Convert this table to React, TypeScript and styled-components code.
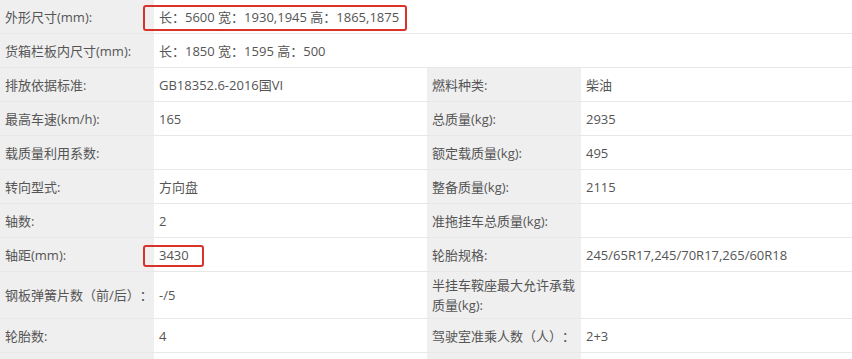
import React from "react";
import styled, { createGlobalStyle } from "styled-components";

const GlobalStyle = createGlobalStyle`
  html, body { margin: 0; padding: 0; background: #ffffff; }
  body {
    font-family: "Open Sans", "Noto Sans CJK SC", sans-serif;
    font-size: 13px;
    color: #555555;
    text-spacing-trim: space-all;
  }
`;

const Grid = styled.div`
  display: grid;
  grid-template-columns: 154px 273px 154px 1fr;
  width: 852px;
`;

const Cell = styled.div<{ $label?: boolean; $span?: number }>`
  box-sizing: border-box;
  display: flex;
  align-items: center;
  min-height: 34px;
  padding: 3px 5px;
  line-height: 20px;
  border-bottom: 1px solid #e8e8e8;
  background: ${(p) => (p.$label ? "#efefef" : "#ffffff")};
  grid-column: span ${(p) => p.$span ?? 1};
  white-space: nowrap;
  position: relative;
`;

const Highlight = styled.span<{ $w: number; $h: number; $top: number }>`
  position: absolute;
  z-index: 1;
  left: -11px;
  top: ${(p) => p.$top}px;
  width: ${(p) => p.$w}px;
  height: ${(p) => p.$h}px;
  box-sizing: border-box;
  border: 2px solid #d8322a;
  border-radius: 3px;
  pointer-events: none;
`;

type Pair = [React.ReactNode, React.ReactNode];

const rows: { left: Pair; right: Pair; mark?: boolean }[] = [
  { left: ["排放依据标准:", "GB18352.6-2016国VI"], right: ["燃料种类:", "柴油"] },
  { left: ["最高车速(km/h):", "165"], right: ["总质量(kg):", "2935"] },
  { left: ["载质量利用系数:", ""], right: ["额定载质量(kg):", "495"] },
  { left: ["转向型式:", "方向盘"], right: ["整备质量(kg):", "2115"] },
  { left: ["轴数:", "2"], right: ["准拖挂车总质量(kg):", ""] },
  { left: ["轴距(mm):", "3430"], right: ["轮胎规格:", "245/65R17,245/70R17,265/60R18"], mark: true },
  {
    left: ["钢板弹簧片数（前/后）：", "-/5"],
    right: [
      <span>
        半挂车鞍座最大允许承载
        <br />
        质量(kg):
      </span>,
      "",
    ],
  },
  { left: ["轮胎数:", "4"], right: ["驾驶室准乘人数（人）：", "2+3"] },
  { left: ["", ""], right: ["", ""] },
];

export default function App() {
  return (
    <>
      <GlobalStyle />
      <Grid>
        <Cell $label>外形尺寸(mm):</Cell>
        <Cell $span={3}>
          长：5600 宽：1930,1945 高：1865,1875
          <Highlight $w={264} $h={26} $top={5} />
        </Cell>
        <Cell $label>货箱栏板内尺寸(mm):</Cell>
        <Cell $span={3}>长：1850 宽：1595 高：500</Cell>
        {rows.map((r, i) => (
          <React.Fragment key={i}>
            <Cell $label>{r.left[0]}</Cell>
            <Cell>
              {r.left[1]}
              {r.mark && <Highlight $w={61} $h={22} $top={7} />}
            </Cell>
            <Cell $label>{r.right[0]}</Cell>
            <Cell>{r.right[1]}</Cell>
          </React.Fragment>
        ))}
      </Grid>
    </>
  );
}
